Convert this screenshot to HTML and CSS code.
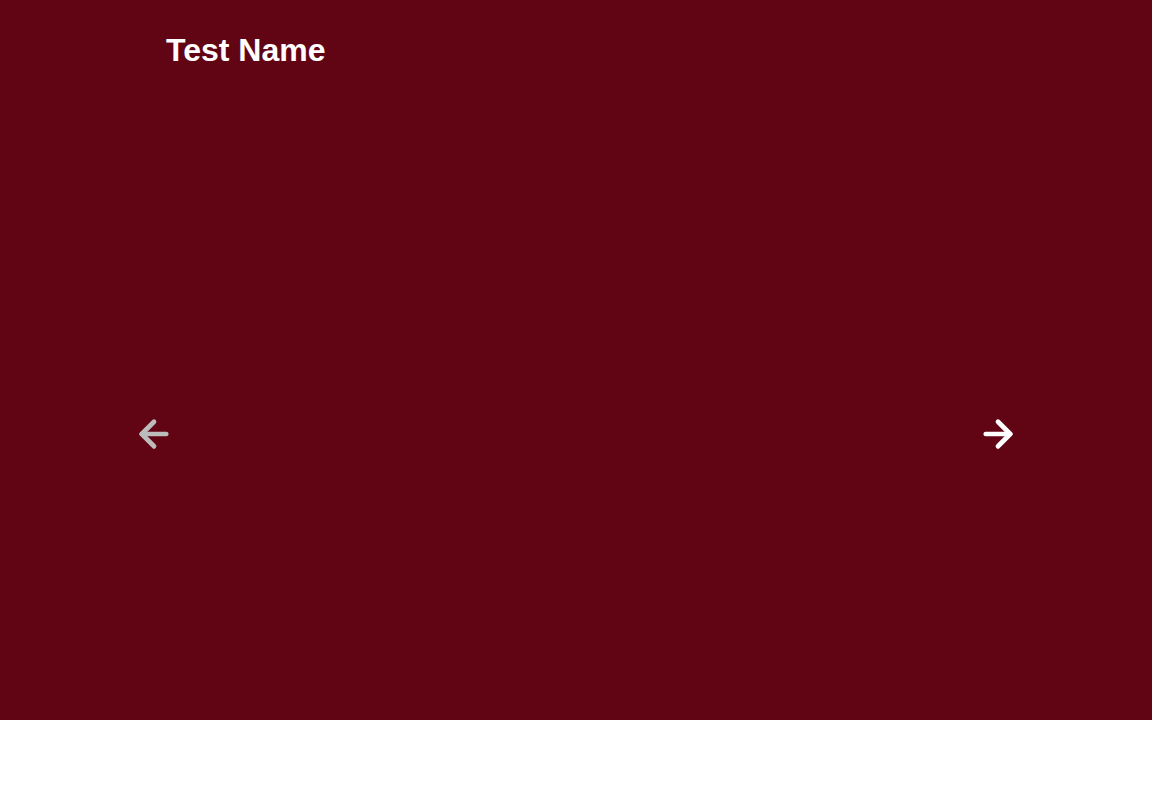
FILE: index.html
```html
<!DOCTYPE html>
<html>
<head>
<meta charset="utf-8">
<link rel="stylesheet" href="styles.css">
</head>
<body>
<section class="carousel">
  <h1 class="title">Test Name</h1>
  <button class="nav nav-prev" aria-label="Previous">
    <svg width="42" height="42" viewBox="0 0 24 24" fill="none" stroke="currentColor" stroke-width="2.7" stroke-linecap="round" stroke-linejoin="round"><path d="M19 12H5"/><path d="M12 19l-7-7 7-7"/></svg>
  </button>
  <button class="nav nav-next" aria-label="Next">
    <svg width="42" height="42" viewBox="0 0 24 24" fill="none" stroke="currentColor" stroke-width="2.7" stroke-linecap="round" stroke-linejoin="round"><path d="M5 12h14"/><path d="M12 5l7 7-7 7"/></svg>
  </button>
</section>
</body>
</html>
```
FILE: styles.css
```css
html, body {
  margin: 0;
  padding: 0;
  background: #ffffff;
  font-family: "Liberation Sans", Arial, sans-serif;
}
.carousel {
  position: relative;
  height: 720px;
  background: #610515;
  padding: 0 0 0 166px;
  box-sizing: border-box;
}
.title {
  margin: 0;
  padding-top: 27px;
  font-size: 32px;
  line-height: 46px;
  font-weight: bold;
  color: #ffffff;
}
.nav {
  position: absolute;
  top: 413px;
  width: 42px;
  height: 42px;
  padding: 0;
  border: 0;
  background: transparent;
  display: flex;
  cursor: pointer;
}
.nav-prev {
  left: 133px;
  color: #bcbcbc;
}
.nav-next {
  left: 977px;
  color: #ffffff;
}
```
